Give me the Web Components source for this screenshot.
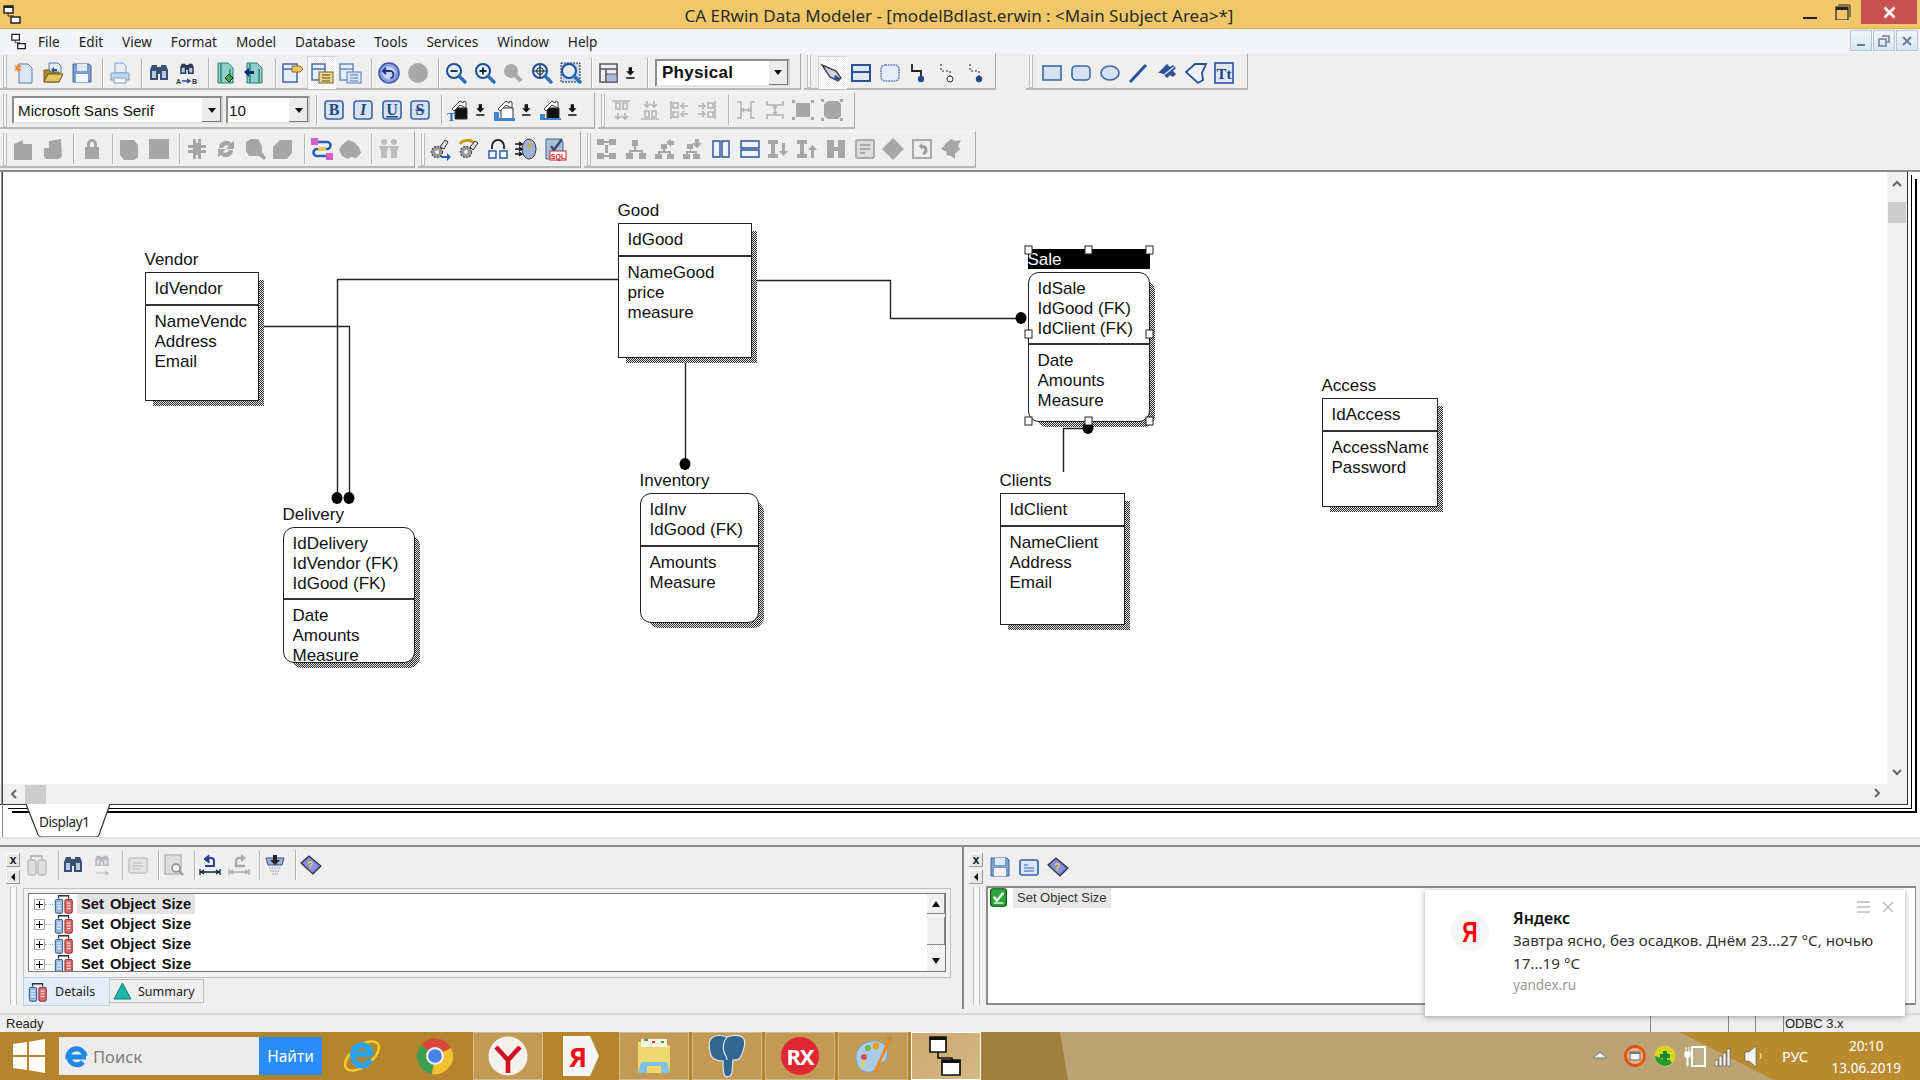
<!DOCTYPE html>
<html>
<head>
<meta charset="utf-8">
<title>CA ERwin Data Modeler</title>
<style>
  html, body { margin: 0; height: 100%; overflow: hidden; background: #efefef; }
  body { font-family: "Liberation Sans", sans-serif; }
</style>
</head>
<body>
<erwin-app></erwin-app>
<script>
// ---- icons ----
const G = '#a9a9a9';
const mag = (inner = '', c = '#1c4f96') => `<circle cx="10" cy="10" r="7" fill="#e4eefa" stroke="${c}" stroke-width="2"/><path d="M15 15l6 6" stroke="#2b6fb8" stroke-width="3.4" stroke-linecap="round"/>${inner}`;
const binoc = (c = '#3b4f75') => `<path d="M3 19V9l2-5h5v2h4V4h5l2 5v10h-8v-6h-2v6z" fill="${c}"/><path d="M5 10h4v7H5zM15 10h4v7h-4z" fill="#b9c9e0"/>`;
const down = `<path d="M8 5h4v5h3l-5 5-5-5h3z M5 17h10v2H5z" fill="#111"/>`;
const house = (body, under) => `<path d="M8 10h12v11H8z" fill="${body}" stroke="#333"/><path d="M5 11l8-8 3 2 1-2 2 1v6l-6-3-6 6z" fill="#fff" stroke="#444"/>${under}`;
const fmt = (ch, style = '') => `<rect x="3" y="3" width="18" height="18" rx="3" fill="#d6e3f4" stroke="#3c63a5" stroke-width="1.6"/><text x="12" y="17" text-anchor="middle" font-family="Liberation Serif" font-weight="700" font-size="16" fill="#27477f" ${style}>${ch}</text>`;
const gear = `<circle cx="9" cy="15" r="5.5" fill="#999" stroke="#555" stroke-width="1.4" stroke-dasharray="2 1.2"/><circle cx="9" cy="15" r="2" fill="#eee"/>`;
const alignL = (d) => `<path d="${d}" fill="none" stroke="#b4b4b4" stroke-width="1.6"/>`;
const tree = (d) => `<path d="${d}" fill="#a6a6a6"/>`;
const doc = (c1, c2) => `<path d="M4 2h10l5 5v15H4z" fill="${c1}" stroke="#2f7a78"/><path d="M7 2v20M16 8v14" stroke="${c2}" stroke-width="2"/>`;
const win = (extra) => `<path d="M2 3h14v18H2z" fill="#e6eefa" stroke="#3f66a6" stroke-width="1.5"/><path d="M2 8h14" stroke="#3f66a6" stroke-width="1.5"/>${extra}`;
const bottles = (a, b) => `<path d="M6 6V3h11v3" fill="none" stroke="#333" stroke-width="1.4"/><rect x="2.5" y="7" width="8" height="15" rx="1.5" fill="${a}" stroke="#224a86"/><rect x="13" y="7" width="8" height="15" rx="1.5" fill="${b}" stroke="#8a2020"/><path d="M4.5 11h4M4.5 14h4M4.5 17h4M15 11h4M15 14h4M15 17h4" stroke="#fff"/>`;

const ICONS = {
  new: `<path d="M7 3h9l4 4v15H7z" fill="#dbe6f5" stroke="#5b7aa8"/><path d="M6 2l1 3 3-1-2 3 2 3-3-1-1 3-1-3-3 1 2-3-2-3 3 1z" fill="#ef8a3a"/>`,
  open: `<path d="M8 2h9l3 3v9H8z" fill="#e2ebf7" stroke="#5b7aa8"/><path d="M3 9h5l2 2h8v10H3z" fill="#a8892c" stroke="#6d5a18"/><path d="M3 21l4-8h15l-4 8z" fill="#e3c762" stroke="#6d5a18"/><path d="M10 9l3-3v2h3v2h-3v2z" fill="#2a4f8d"/>`,
  save: `<path d="M3 3h16l2 2v16H3z" fill="#7d9ccb" stroke="#48669a"/><rect x="7" y="3" width="10" height="7" fill="#dfe8f5"/><rect x="6" y="13" width="12" height="8" fill="#f2f5fa"/>`,
  print: `<path d="M7 2h8l3 3v7H7z" fill="#e6eefa" stroke="#7f9cc6"/><path d="M3 12h18v7H3z" fill="#c6d6ec" stroke="#7f9cc6"/><path d="M6 17h12v5H6z" fill="#f3f6fb" stroke="#7f9cc6"/>`,
  find: binoc(),
  replace: `<g transform="translate(3 0) scale(.75 .68)">${binoc('#2c3a57')}</g><text x="1" y="23" font-size="7" font-family="Liberation Sans" font-weight="700" fill="#333">A</text><path d="M7 20h7M12 18l3 2-3 2" fill="none" stroke="#2a4f8d" stroke-width="1.5"/><text x="17" y="23" font-size="7" font-family="Liberation Sans" font-weight="700" fill="#333">B</text>`,
  docgreen: doc('#8fd0c6', '#3f9a93') + `<path d="M15 13l4 4-4 4-4-4z" fill="#2eb13c" stroke="#111"/>`,
  docblue: doc('#8fd0c6', '#3f9a93') + `<path d="M1 11l5-4v3h5v3H6v3z" fill="#12287a"/>`,
  sub1: win(`<path d="M11 5h8l3 3-3 3h-8z" fill="#f0c65c" stroke="#8c6e1c"/>`),
  tbl1: `<path d="M2 3h13v16H2z" fill="#e6eefa" stroke="#4a6ea8" stroke-width="1.5"/><path d="M2 8h13" stroke="#4a6ea8" stroke-width="1.5"/><rect x="9" y="11" width="14" height="11" fill="#e8d38f" stroke="#7a6420"/><path d="M12 14h8M12 17h8M12 20h8" stroke="#5a4a14"/>`,
  tbl2: `<path d="M2 3h13v16H2z" fill="#e6eefa" stroke="#6b8abb" stroke-width="1.5"/><path d="M2 8h13" stroke="#6b8abb" stroke-width="1.5"/><rect x="9" y="11" width="14" height="11" fill="#d9e5f5" stroke="#577cb5"/><path d="M12 14h8M12 17h8M12 20h8" stroke="#577cb5"/>`,
  undo: `<circle cx="12" cy="12" r="10" fill="#8c9fe0" stroke="#3952a8" stroke-width="1.5"/><circle cx="12" cy="12" r="6.5" fill="#c9d3f4"/><path d="M9 7l-3 3 3 3M6.5 10h6a3.5 3.5 0 0 1 1 7" fill="none" stroke="#1f2f7e" stroke-width="1.8"/>`,
  stop: `<circle cx="12" cy="12" r="10" fill="#a8a8a8"/>`,
  zout: mag('<path d="M6.5 10h7" stroke="#123" stroke-width="1.8"/>'),
  zin: mag('<path d="M6.5 10h7M10 6.5v7" stroke="#123" stroke-width="1.8"/>'),
  zgrey: `<circle cx="10" cy="10" r="7" fill="${G}"/><path d="M14 14l6 6" stroke="${G}" stroke-width="4"/>`,
  zfit: mag('<path d="M4 10h12M10 4v12" stroke="#123" stroke-width="1.2"/><circle cx="10" cy="10" r="3.4" fill="none" stroke="#123"/>'),
  zsel: `<rect x="2" y="2" width="19" height="19" fill="#c9d3e2" stroke="#234" stroke-dasharray="2 1"/>` + mag(''),
  panel: `<path d="M3 3h17v18H3z" fill="#eee" stroke="#556" stroke-width="1.6"/><path d="M3 8h17M9 8v13" stroke="#556" stroke-width="1.6"/><path d="M9 13h11v8H9z" fill="#a9bbd2" stroke="#556"/>`,
  down,
  b: fmt('B'), i: fmt('I', 'font-style="italic"'), u: fmt('U', 'text-decoration="underline"'), s: fmt('S', 'text-decoration="line-through"'),
  font: house('#111', `<text x="0" y="23" font-family="Liberation Serif" font-weight="700" font-size="13" fill="#2a6fc0">T</text>`),
  fill: house('#fff', `<path d="M1 14h5v6h16v3H1z" fill="#3f83d6"/>`),
  line: house('#111', `<path d="M1 16h5v4h16v2H1z" fill="#3f83d6"/>`),
  aT: alignL('M3 3h18M7 5v6h4V5zM14 5v6h4V5zM9 15v6M6 18l3 3 3-3M16 15v6M13 18l3 3 3-3'),
  aB: alignL('M3 21h18M7 19v-6h4v6zM14 19v-6h4v6zM9 3v6M6 6l3 3 3-3M16 3v6M13 6l3 3 3-3'),
  aL: alignL('M4 3v18M6 5h5v5H6zM6 14h5v5H6zM14 8h7M17 5l-3 3 3 3M14 16h7M17 13l-3 3 3 3'),
  aR: alignL('M20 3v18M13 5h5v5h-5zM13 14h5v5h-5zM3 8h7M7 5l3 3-3 3M3 16h7M7 13l3 3-3 3'),
  dH: alignL('M3 4h4v16H3M21 4h-4v16h4M8 12h8M10 10l-2 2 2 2M14 10l2 2-2 2'),
  dV: alignL('M4 3v4h16V3M4 21v-4h16v4M12 8v8M10 10l2-2 2 2M10 14l2 2 2-2'),
  sW: tree('M5 5h14v14H5z M1 2h3v3H1zM20 2h3v3h-3zM1 19h3v3H1zM20 19h3v3h-3z'),
  sH: tree('M4 6l4-3h10l3 3v12l-3 3H8l-4-3z M1 1h3v3H1zM20 1h3v3h-3zM1 20h3v3H1zM20 20h3v3h-3z'),
  b1: tree('M2 7l9-4v4h9v16H2z'),
  b2: tree('M8 4l12-2 1 17-3 3H5l-2-2v-9h5z'),
  lock: tree('M7 10V7a5 5 0 0 1 10 0v3h2v12H5V10zM10 10h4V7a2 2 0 0 0-4 0z'),
  b3: tree('M2 3h14l4 5v12l-4 3H6L2 18z'),
  sq: tree('M2 2h20v20H2z'),
  puz: tree('M8 2h3v4h2V2h3v6h5v3h-5v2h5v3h-5v6h-3v-4h-2v4H8v-6H3v-3h5v-2H3V8h5z'),
  sync: `<path d="M5 11a7 7 0 0 1 12-5l3-2v8h-8l3-3a4 4 0 0 0-6 2zM19 13a7 7 0 0 1-12 5l-3 2v-8h8l-3 3a4 4 0 0 0 6-2z" fill="#a6a6a6"/>`,
  b4: tree('M3 5l5-3h7l4 7v6l4 6-2 2-5-4H6l-3-5z'),
  b5: tree('M2 10l7-7h12v13l-5 6H2z'),
  link: `<path d="M6 5h11a3 3 0 0 1 0 7H7a3 3 0 0 0 0 7h12" fill="none" stroke="#2a5fb5" stroke-width="2.6"/><path d="M8 12h8" stroke="#e6c43a" stroke-width="3"/><rect x="1" y="1" width="7" height="7" fill="#d45ec3"/><rect x="16" y="16" width="7" height="7" fill="#d45ec3"/>`,
  cloud: tree('M4 8l6-5 6 2 5 5 2 6-5 5-5-1-3 2-6-3-3-6z'),
  ppl: `<g fill="#bdbdbd"><circle cx="7" cy="5" r="3"/><circle cx="17" cy="5" r="3"/><path d="M2 9h10l-2 6v6H4v-6zM12 9h10l-2 6v6h-6v-6z"/></g>`,
  gear1: gear + `<path d="M13 19h6v-3l4 4-4 4v-3h-6z" fill="#2a5fb5"/><path d="M12 10l5-7 3 2-4 7z" fill="#ddd" stroke="#333"/>`,
  gear2: gear + `<path d="M3 7a8 6 0 0 1 14-1" fill="none" stroke="#c79a22" stroke-width="3"/><path d="M13 10l5-6 3 2-5 7z" fill="#ddd" stroke="#333"/>`,
  headset: `<path d="M6 12V9a6 6 0 0 1 12 0v3" fill="none" stroke="#222" stroke-width="1.8"/><rect x="3" y="14" width="7" height="7" fill="#fff" stroke="#2a5fb5" stroke-width="1.5"/><rect x="14" y="14" width="7" height="7" fill="#fff" stroke="#2a5fb5" stroke-width="1.5"/>`,
  mouse: `<ellipse cx="15" cy="12" rx="7" ry="10" fill="#9fb2cf" stroke="#334"/><ellipse cx="15" cy="8" rx="1.5" ry="3" fill="#e0a92f"/><path d="M1 7h6M1 12h6M1 17h6M5 5l3 2-3 2M5 10l3 2-3 2M5 15l3 2-3 2" fill="none" stroke="#111" stroke-width="1.4"/>`,
  sql: `<path d="M3 2h14l3 3v17H3z" fill="#a8c0dc" stroke="#47658e"/><path d="M8 9l3 4 8-11" fill="none" stroke="#384c6c" stroke-width="2.4"/><rect x="7" y="14" width="16" height="9" fill="#fff" stroke="#c22"/><text x="15" y="22" text-anchor="middle" font-size="7" font-weight="700" font-family="Liberation Sans" fill="#c22">SQL</text>`,
  tr1: tree('M3 2h7v6H3zM15 2h7v6h-7zM10 4h5v2h-5zM11 8h3v8h-3zM3 16h7v6H3zM15 16h7v6h-7zM10 18h5v2h-5z'),
  tr2: tree('M9 3h6v6H9zM11 9h2v4h7v3h3v6h-7v-6h2v-1H8v1h2v6H3v-6h3v-3h5z'),
  tr3: tree('M9 7h6v5h-2v2h6v3h3v5h-7v-5h2v-1H8v1h2v5H3v-5h3v-3h5v-2H9zM14 5l5-3v2h3v4h-3v2z'),
  tr4: tree('M7 7h6v5h-2v2h6v3h3v5h-7v-5h2v-1H8v1h2v5H3v-5h3v-3h4v-2H7zM15 2h4v4h3l-5 5-5-5h3z'),
  col2: `<path d="M4 4h7v16H4zM13 4h7v16h-7z" fill="#eef3fb" stroke="#2a5296" stroke-width="1.4"/>`,
  row2: `<path d="M3 4h18v7H3zM3 13h18v7H3z" fill="#eef3fb" stroke="#2a5296" stroke-width="1.4"/>`,
  ordD: tree('M2 3h10v4H9v10h3v4H2v-4h3V7H2zM16 6h3v8h3l-4.500 5L13 14h3z'),
  ordU: tree('M2 3h10v4H9v10h3v4H2v-4h3V7H2zM16 21h3v-8h3l-4.500-5L13 13h3z'),
  h: tree('M3 3h7v7h4V3h7v18h-7v-7h-4v7H3z'),
  note: `<rect x="3" y="3" width="18" height="18" rx="2" fill="#ddd" stroke="#aaa" stroke-width="2"/><path d="M7 8h10M7 12h10M7 16h5" stroke="#999" stroke-width="1.6"/>`,
  dia: tree('M12 1l11 11-11 11L1 12z'),
  back: `<rect x="3" y="3" width="18" height="18" fill="#eee" stroke="#aaa" stroke-width="2"/><path d="M9 9l3-3v2a5 5 0 0 1 1 10v-3a2 2 0 0 0-1-4v2z" fill="#999"/>`,
  tool: tree('M6 7l6-5 4 2 6-1-3 6 2 3-5 5v5l-4-3-5-1 1-3-6-3 4-4z'),
  cursor: `<path d="M2 4l14 6 5 7-3 3-8-4z" fill="#cfd6df" stroke="#444" stroke-width="1.4"/><path d="M15 14l5 3-2 3-4-3z" fill="#2a5296"/>`,
  ent: `<path d="M3 4h18v16H3z" fill="#dfe8f6" stroke="#2a5296" stroke-width="2"/><path d="M3 11h18" stroke="#2a5296" stroke-width="2"/>`,
  entr: `<rect x="3" y="4" width="18" height="16" rx="4" fill="#e6ecf8" stroke="#6d89c0" stroke-width="1.6" stroke-dasharray="2 .7"/>`,
  c1: `<path d="M6 3v7h9v5" fill="none" stroke="#222" stroke-width="1.8"/><circle cx="15" cy="18" r="3.2" fill="#24478c"/>`,
  c2: `<path d="M6 3v7h9v5" fill="none" stroke="#222" stroke-dasharray="2 2"/><circle cx="15" cy="18" r="3" fill="#fff" stroke="#333"/>`,
  c3: `<path d="M6 3v7h9v5" fill="none" stroke="#222" stroke-dasharray="2 2"/><circle cx="15" cy="18" r="3.2" fill="#24478c"/>`,
  rect: `<rect x="3" y="5" width="18" height="14" fill="#d6e2f4" stroke="#3f66a6" stroke-width="1.6"/>`,
  rrect: `<rect x="3" y="5" width="18" height="14" rx="4" fill="#d6e2f4" stroke="#3f66a6" stroke-width="1.6"/>`,
  oval: `<ellipse cx="12" cy="12" rx="9" ry="7" fill="#d6e2f4" stroke="#3f66a6" stroke-width="1.6"/>`,
  ln: `<path d="M4 21L20 4" stroke="#2a4f9d" stroke-width="3"/>`,
  pin: `<path d="M3 12l9-9 3 3 3-2 3 3-3 3 3 3-3 3-3-2-3 3-3-3-3-2z" fill="#2f4f99"/><path d="M5 17L19 6" stroke="#dfe8f6" stroke-width="1.4"/>`,
  tag: `<path d="M2 11l9-8h11l-4 9 1 7-5 3z" fill="#eef3fb" stroke="#2a4f9d" stroke-width="1.8"/>`,
  txt: `<rect x="3" y="2" width="18" height="20" fill="#dfe8f6" stroke="#2a4f9d" stroke-width="1.6"/><text x="12" y="18" text-anchor="middle" font-family="Liberation Serif" font-weight="700" font-size="15" fill="#1f3d7c">Tt</text>`,
  bottles: bottles('#9ab8dc', '#d96c6c'),
  bottlesG: `<path d="M6 6V3h11v3" fill="none" stroke="#aaa" stroke-width="1.4"/><rect x="3" y="7" width="8" height="15" rx="1.5" fill="#ddd" stroke="#aaa"/><rect x="13" y="7" width="8" height="15" rx="1.5" fill="#ddd" stroke="#aaa"/>`,
  findG: `<g opacity=".4"><g transform="translate(3 0) scale(.75 .68)">${binoc('#666')}</g></g><path d="M6 20h12M15 18l3 2-3 2" fill="none" stroke="#bbb" stroke-width="1.2"/>`,
  card: `<rect x="3" y="5" width="18" height="15" rx="2" fill="#e2e2e2" stroke="#c4c4c4" stroke-width="1.6"/><path d="M7 10h10M7 13h10M7 16h7" stroke="#bbb"/>`,
  cardB: `<rect x="3" y="5" width="18" height="15" rx="2" fill="#dce8f8" stroke="#2f62b0" stroke-width="1.6"/><path d="M7 10h4M7 13h10M7 16h10" stroke="#2f62b0"/>`,
  rep: `<rect x="3" y="2" width="16" height="19" fill="#ddd" stroke="#bbb" stroke-width="1.6"/><circle cx="14" cy="15" r="4" fill="#eee" stroke="#888" stroke-width="1.4"/><path d="M17 18l4 4" stroke="#999" stroke-width="2"/>`,
  arrUp: `<path d="M6 6l5-4v8z" fill="#2a3f96" stroke="#2a3f96"/><path d="M9 5h4a3 3 0 0 1 3 3v5H7" fill="none" stroke="#2a3f96" stroke-width="2"/><path d="M2 16v6M22 16v6M3 19h18M6 17l-3 2 3 2M18 17l3 2-3 2" fill="none" stroke="#123" stroke-width="1.3"/>`,
  arrUpG: `<path d="M16 5h-4a3 3 0 0 0-3 3v5h9" fill="none" stroke="#aaa" stroke-width="2.4"/><path d="M14 1l5 4-5 4z" fill="#aaa"/><path d="M2 16v6M22 16v6M3 19h18M6 17l-3 2 3 2M18 17l3 2-3 2" fill="none" stroke="#aaa" stroke-width="1.3"/>`,
  dl: `<path d="M3 5h18l-2 7H5z" fill="#9db4d9" stroke="#334d86"/><path d="M10 2h4v5h3l-5 5-5-5h3z" fill="#222"/><path d="M6 15h12M7 18h10M9 21h6" stroke="#7a8db0" stroke-dasharray="1.500 1"/>`,
  help: `<path d="M2 10L10 3l12 10-8 8z" fill="#6a78d8" stroke="#333" stroke-width="1.2"/><path d="M4 10l6-5 9 8-6 6z" fill="#8792e5"/><text x="11" y="16" text-anchor="middle" font-size="10" font-weight="700" font-family="Liberation Sans" fill="#e8d23a">?</text>`,
  check: `<rect x="2" y="1" width="20" height="22" rx="3" fill="#2aa83a" stroke="#0c4a14" stroke-width="1.4"/><path d="M6 11l4 5 8-10" fill="none" stroke="#fff" stroke-width="3"/><path d="M6 19h12" stroke="#fff" stroke-width="1.6"/>`
};
const svgIcon = (name, size = 24) => `<svg width="${size}" height="${size}" viewBox="0 0 24 24" aria-hidden="true">${ICONS[name] || ''}</svg>`;

// ---- small helper: class with static css + html ----
function defineEl(tag, css, html, setup) {
  customElements.define(tag, class extends HTMLElement {
    constructor() {
      super();
      this.attachShadow({ mode: 'open' });
    }
    connectedCallback() {
      const body = typeof html === 'function' ? html(this) : html;
      this.shadowRoot.innerHTML = `<style>${css}</style>${body}`;
      if (setup) setup(this);
    }
  });
}

defineEl('title-bar', `
  :host { display: flex; align-items: flex-start; justify-content: center; position: relative; height: 28px; background: #f0c869; border-bottom: 1px solid #d3ab51; font: 17px "Noto Sans", sans-serif; color: #2b2b2b; }
  .txt { line-height: 32px; padding-right: 2px; white-space: nowrap; }
  .app { position: absolute; left: 3px; top: 5px; }
  .btns { position: absolute; right: 3px; top: 0; display: flex; align-items: flex-start; }
  .min, .max { width: 28px; height: 24px; display: flex; justify-content: center; align-items: center; }
  .max { margin-left: 5px; }
  .close { width: 56px; height: 24px; background: #c75050; margin-left: 4px; display: flex; justify-content: center; align-items: center; }
`, `
  <svg class="app" width="19" height="19" viewBox="0 0 19 19"><path d="M1 1h9v7H1z" fill="#fff" stroke="#222" stroke-width="1.500"/><path d="M1 1h9v2H1zM8 12h9v2H8z" fill="#222"/><path d="M8 12h9v6H8z" fill="#fff" stroke="#222" stroke-width="1.500"/><path d="M5 8v3h6" fill="none" stroke="#222"/></svg>
  <span class="txt">CA ERwin Data Modeler - [modelBdlast.erwin : &lt;Main Subject Area&gt;*]</span>
  <div class="btns">
    <div class="min"><svg width="16" height="24" viewBox="0 0 16 24"><path d="M1 17h14v2H1z" fill="#222"/></svg></div>
    <div class="max"><svg width="16" height="16" viewBox="0 0 16 16"><path d="M3 1h12v12" fill="none" stroke="#222"/><path d="M1 3h12v13H1z" fill="none" stroke="#222" stroke-width="1.200"/><path d="M1 3h12v3H1z" fill="#222"/></svg></div>
    <div class="close"><svg width="13" height="13" viewBox="0 0 13 13"><path d="M1.500 1.500l10 10M11.500 1.500l-10 10" stroke="#fff" stroke-width="2.600"/></svg></div>
  </div>
`);

defineEl('menu-bar', `
  :host { display: flex; position: relative; height: 24px; background: #f4f5f8; font: 13.6px "Noto Sans", sans-serif; color: #222; align-items: center; }
  .icon { margin: 0 11px 0 11px; width: 16px; flex: none; }
  .items { display: flex; gap: 19px; }
  .mdi { position: absolute; right: 2px; top: 1px; display: flex; gap: 1px; }
  .mdi div { width: 22px; height: 21px; border: 1px solid #b5c3d3; box-sizing: border-box; background: linear-gradient(#eef5fc, #d8e7f6); display: flex; align-items: center; justify-content: center; }
`, `
  <svg class="icon" width="18" height="17" viewBox="0 0 19 19"><path d="M1 1h9v7H1z" fill="#fff" stroke="#222" stroke-width="1.500"/><path d="M8 12h9v6H8z" fill="#fff" stroke="#222" stroke-width="1.500"/><path d="M5 8v3h6" fill="none" stroke="#222"/></svg>
  <div class="items"><span>File</span><span>Edit</span><span>View</span><span>Format</span><span>Model</span><span>Database</span><span>Tools</span><span>Services</span><span>Window</span><span>Help</span></div>
  <div class="mdi">
    <div><svg width="12" height="12" viewBox="0 0 12 12"><path d="M2 9h8v2H2z" fill="#6d7d90"/></svg></div>
    <div><svg width="12" height="12" viewBox="0 0 12 12"><path d="M4 1h7v6H9M1 4h7v7H1z" fill="none" stroke="#6d7d90" stroke-width="1.500"/></svg></div>
    <div><svg width="12" height="12" viewBox="0 0 12 12"><path d="M2 2l8 8M10 2l-8 8" stroke="#6d7d90" stroke-width="2"/></svg></div>
  </div>
`);

defineEl('tool-row', `
  :host { display: flex; height: 37px; margin-bottom: 2px; gap: 3px; }
`, `<slot></slot>`);

defineEl('tool-bar', `
  :host { display: flex; align-items: center; height: 37px; box-sizing: border-box; padding-left: 10px; padding-right: 6px; position: relative; background: #efefef; border-right: 1px solid #a8a8a8; border-bottom: 2px solid #b9b9b9; border-top: 1px solid #f7f7f7; }
  .grip { position: absolute; left: 3px; top: 1px; bottom: 0; width: 4px; border: 1px solid #bdbdbd; border-top: 0; box-sizing: border-box; background: #f6f6f6; }
`, `<div class="grip"></div><slot></slot>`);

defineEl('tool-btn', `
  :host { display: flex; align-items: center; justify-content: center; width: 28.7px; height: 30px; flex: none; box-sizing: border-box; }
  :host([pressed]) { background: repeating-conic-gradient(#fff 0 25%, #ececec 0 50%) 0 0 / 2px 2px; box-shadow: inset 1px 1px #d0d0d0, inset -1px -1px #fff; height: 33px; }
  :host([narrow]) { width: 17.5px; }
  svg { display: block; overflow: visible; }
`, (el) => svgIcon(el.getAttribute('icon'), el.hasAttribute('narrow') ? 20 : 24));

defineEl('tool-sep', `
  :host { display: block; flex: none; width: var(--sep, 9.8px); height: 30px; }
  div { width: 1px; height: 100%; margin-left: 6px; background: #b4b4b4; box-shadow: 1px 0 #fff; }
`, `<div></div>`);

defineEl('combo-box', `
  :host { display: flex; box-sizing: border-box; flex: none; height: 28px; background: #fff; border: 2px solid #8d8d8d; border-right-color: #cfcfcf; border-bottom-color: #e4e4e4; color: #111; align-items: center; position: relative; overflow: hidden; }
  span { padding-left: var(--pad, 5px); white-space: nowrap; flex: 1; }
  .arrow { width: 19px; align-self: stretch; background: #ececec; border-left: 1px solid #fff; box-shadow: inset -1px -1px #777; display: flex; align-items: center; justify-content: center; flex: none; }
  .arrow i { width: 0; height: 0; border: 4px solid transparent; border-top: 5px solid #111; border-bottom: 0; }
`, `<span><slot></slot></span><div class="arrow"><i></i></div>`);

defineEl('tool-area', `
  :host { display: block; height: 117px; background: #efefef; box-sizing: border-box; overflow: hidden; }
`, `<slot></slot>`);

// entity box on the diagram
defineEl('er-entity', `
  :host { position: absolute; display: block; font: 17px/20px "Liberation Sans", sans-serif; color: #111; }
  .name { position: absolute; left: -0.5px; right: 0; top: -22px; height: 20px; white-space: nowrap; }
  :host([selected]) .name { background: #000; color: #fff; top: -23px; padding-top: 1px; box-sizing: border-box; }
  .shadow { position: absolute; left: 8px; top: 8px; right: -5px; bottom: -5px; background: repeating-conic-gradient(#333 0 25%, #ddd 0 50%) 0 0 / 2px 2px; border-radius: var(--r); }
  .box { position: absolute; inset: 0; box-sizing: border-box; background: #fff; border: 1px solid #222; border-radius: var(--r); overflow: hidden; display: flex; flex-direction: column; }
  .k { box-sizing: border-box; flex: none; border-bottom: 2px solid #333; padding: 6px 9px 0 8.5px; overflow: hidden; white-space: nowrap; }
  .a { padding: 6px 9px 0 8.5px; white-space: nowrap; overflow: hidden; }
  .k div, .a div { overflow: hidden; height: 20px; }
`, (el) => {
  const rows = (s) => (s || '').split('|').map(t => `<div>${t}</div>`).join('');
  return `<div class="name">${el.getAttribute('name')}</div><div class="shadow"></div>
    <div class="box"><div class="k" style="height:${el.getAttribute('div')}px">${rows(el.getAttribute('keys'))}</div><div class="a">${rows(el.getAttribute('attrs'))}</div></div>`;
}, (el) => {
  el.style.left = el.getAttribute('x') + 'px';
  el.style.top = (el.getAttribute('y') - 172) + 'px';
  el.style.width = el.getAttribute('w') + 'px';
  el.style.height = el.getAttribute('h') + 'px';
  el.style.setProperty('--r', el.hasAttribute('rounded') ? '11px' : '0');
});

const chev = (d) => `<svg width="12" height="12" viewBox="0 0 12 12"><path d="${d}" fill="none" stroke="#666" stroke-width="2"/></svg>`;

defineEl('model-canvas', `
  :host { display: grid; grid-template-columns: 1887px 20px; grid-template-rows: 612px 20px; height: 632px; position: relative; background: #fff; }
  .paper { position: relative; overflow: hidden; background: #fff; grid-column: 1; grid-row: 1; }
  .edge { position: absolute; left: 2px; top: 0; bottom: 0; width: 1px; background: #444; box-shadow: -1px 0 #999; z-index: 4; }
  .vs { background: #f0f0f0; display: flex; flex-direction: column; align-items: center; position: relative; grid-column: 2; grid-row: 1; }
  .vs .u { height: 24px; display: flex; align-items: center; }
  .vs .t { width: 18px; height: 21px; background: #cdcdcd; margin-top: 6px; }
  .vs .d { margin-top: auto; height: 24px; display: flex; align-items: center; }
  .hs { grid-column: 1 / 3; grid-row: 2; background: #f0f0f0; display: flex; align-items: center; padding-left: 8px; }
  .hs .t { width: 21px; height: 19px; background: #cdcdcd; margin-left: 5px; }
  .hs .r { margin-left: auto; margin-right: 24px; }
  svg.wires { position: absolute; left: 0; top: 0; }
  svg.top { z-index: 3; }
`, `
  <div class="paper">
    <svg class="wires" width="1887" height="612" viewBox="0 172 1887 612">
      <g fill="none" stroke="#222" stroke-width="1.400">
        <path d="M618 279.500H337.500V496"/>
        <path d="M258 326.500H349.500V496"/>
        <path d="M685.500 358V462"/>
        <path d="M752 280.500H890.500V318.500H1020"/>
        <path d="M1063.500 472V428.500H1088"/>
      </g>
    </svg>
    <slot></slot>
    <svg class="wires top" width="1887" height="612" viewBox="0 172 1887 612">
      <g fill="#000">
        <ellipse cx="337" cy="498" rx="5.500" ry="6"/><ellipse cx="349" cy="498" rx="5.500" ry="6"/>
        <ellipse cx="685" cy="464" rx="5.500" ry="6"/><ellipse cx="1021" cy="318" rx="5.500" ry="6"/>
        <ellipse cx="1088" cy="428" rx="5.500" ry="6"/>
      </g>
      <g fill="#fff" stroke="#222">
        <rect x="1025" y="246" width="7" height="8"/><rect x="1085" y="246" width="7" height="8"/><rect x="1146" y="246" width="7" height="8"/>
        <rect x="1025" y="330" width="7" height="8"/><rect x="1146" y="330" width="7" height="8"/>
        <rect x="1025" y="417" width="7" height="8"/><rect x="1085" y="417" width="7" height="8"/><rect x="1146" y="417" width="7" height="8"/>
      </g>
    </svg>
  </div>
  <div class="vs"><div class="u">${chev('M2 8l4-4 4 4')}</div><div class="t"></div><div class="d">${chev('M2 4l4 4 4-4')}</div></div>
  <div class="hs">${chev('M8 2L4 6l4 4')}<div class="t"></div><div class="r">${chev('M4 2l4 4-4 4')}</div></div>
  <div class="edge"></div>
`);

// the three stepped window borders and the sheet tab
defineEl('mdi-frame', `
  :host { display: block; height: 669px; background: #fff; border-top: 2px solid #8a8a8a; box-sizing: border-box; position: relative; overflow: hidden; }
  .l1 { width: 1908px; border-right: 1px solid #333; border-bottom: 1px solid #333; box-sizing: border-box; }
  .l2, .l3 { position: absolute; box-sizing: border-box; }
  .l2 { left: 8px; top: 3px; width: 1904px; height: 634px; border-right: 1px solid #000; border-bottom: 1px solid #000; }
  .l3 { left: 12px; top: 7px; width: 1905px; height: 634px; border-right: 2px solid #000; border-bottom: 2px solid #000; }
  .tab { position: absolute; left: 24px; top: 632px; }
  .tab span { position: absolute; left: 15px; top: 9px; font: 13.5px "Noto Sans", sans-serif; letter-spacing: -.4px; color: #222; }
  .lf { position: absolute; left: 2px; top: 632px; width: 1px; height: 35px; background: #888; }
  .bot { position: absolute; left: 0; right: 0; bottom: 0; height: 2px; background: #e4e4e4; }
`, `
  <div class="l2"></div><div class="l3"></div>
  <div class="l1"><slot></slot></div>
  <div class="lf"></div>
  <div class="tab">
    <svg width="90" height="35" viewBox="0 0 90 35"><path d="M2 0L13 28Q14 33 18 33H72Q75 33 76 28L86 0z" fill="#fff"/><path d="M2 0L13 28Q14 33 18 33H72Q75 33 76 28L86 0" fill="none" stroke="#333" stroke-width="1.200"/></svg>
    <span>Display1</span>
  </div>
  <div class="bot"></div>
`);

defineEl('close-stack', `
  :host { display: flex; flex-direction: column; gap: 3px; width: 14px; flex: none; }
  div { height: 14px; background: #e8e8e8; box-shadow: inset -1px -1px #999, inset 1px 1px #fff; display: flex; align-items: center; justify-content: center; font: 700 12px/1 "Liberation Sans", sans-serif; color: #111; }
  i { width: 0; height: 0; border: 4px solid transparent; border-right: 4px solid #111; border-left: 0; }
`, `<div>x</div><div><i></i></div>`);

defineEl('v-grip', `
  :host { display: block; width: 7px; box-sizing: border-box; border-left: 1px solid #bfbfbf; border-right: 1px solid #bfbfbf; background: #f7f7f7; flex: none; }
`, ``);

defineEl('tree-row', `
  :host { display: flex; align-items: center; height: 20px; padding-left: 5px; white-space: nowrap; font: 700 14.7px "Liberation Sans", sans-serif; color: #111; word-spacing: 2px; }
  .plus { width: 9px; height: 9px; border: 1px solid #aaa; position: relative; background: #fff; flex: none; }
  .plus::before { content: ""; position: absolute; left: 1px; right: 1px; top: 4px; height: 1px; background: #000; }
  .plus::after { content: ""; position: absolute; top: 1px; bottom: 1px; left: 4px; width: 1px; background: #000; }
  .dots { width: 8px; border-top: 1px dotted #aaa; flex: none; }
  svg { flex: none; }
  span { margin-left: 2px; padding: 0 4px; line-height: 20px; }
  :host([sel]) span { background: #e4e4e4; }
`, `<div class="plus"></div><div class="dots"></div>${svgIcon('bottles', 22)}<span><slot></slot></span>`);

defineEl('left-pane', `
  :host { display: flex; width: 964px; height: 100%; box-sizing: border-box; padding: 6px 0 0 6px; flex: none; border-right: 2px solid #8a8a8a; position: relative; --sep: 7.3px; }
  .side { display: flex; flex-direction: column; align-items: center; width: 14px; flex: none; }
  v-grip { margin-top: 3px; height: 118px; }
  .main { flex: 1; display: flex; flex-direction: column; padding-left: 3px; }
  .icons { display: flex; align-items: center; height: 24px; padding-left: 0; margin-bottom: 11px; }
  .group { width: 928px; height: 90px; border: 1px solid #c0c0c0; box-sizing: border-box; background: #f2f2f2; padding: 4px 4px 5px 4px; }
  .tree { height: 100%; box-sizing: border-box; border: 1px solid #777; background: #fff; display: flex; overflow: hidden; }
  .rows { flex: 1; overflow: hidden; }
  .sb { width: 18px; display: flex; flex-direction: column; background: repeating-conic-gradient(#fff 0 25%, #eaeaea 0 50%) 0 0 / 2px 2px; flex: none; }
  .sb div { background: #efefef; box-shadow: inset -1px -1px #888; display: flex; align-items: center; justify-content: center; }
  .sb .b { height: 20px; }
  .sb .th { height: 28px; margin-top: 3px; }
  .sb .b2 { margin-top: auto; box-shadow: none; }
  .sb i { width: 0; height: 0; border: 4.500px solid transparent; }
  .tabs { display: flex; align-items: flex-start; margin-top: -1px; }
  .t { display: flex; align-items: center; box-sizing: border-box; font: 12.5px "Noto Sans", sans-serif; color: #222; }
  .t.on { width: 87px; height: 29px; background: #e3eefa; border: 1px solid #b8d3ef; padding-left: 3px; gap: 6px; }
  .t.off { width: 94px; height: 24px; margin-top: 2px; background: #efefef; border: 1px solid #bdbdbd; border-left: 0; padding-left: 3px; gap: 6px; }
`, `
  <div class="side"><close-stack></close-stack><v-grip></v-grip></div>
  <div class="main">
    <div class="icons">
      <tool-btn icon="bottlesG"></tool-btn><tool-sep></tool-sep><tool-btn icon="find"></tool-btn><tool-btn icon="findG"></tool-btn><tool-sep></tool-sep><tool-btn icon="card"></tool-btn><tool-sep></tool-sep><tool-btn icon="rep"></tool-btn><tool-sep></tool-sep><tool-btn icon="arrUp"></tool-btn><tool-btn icon="arrUpG"></tool-btn><tool-sep></tool-sep><tool-btn icon="dl"></tool-btn><tool-sep></tool-sep><tool-btn icon="help"></tool-btn>
    </div>
    <div class="group"><div class="tree">
      <div class="rows">
        <tree-row sel>Set Object Size</tree-row><tree-row>Set Object Size</tree-row><tree-row>Set Object Size</tree-row><tree-row>Set Object Size</tree-row>
      </div>
      <div class="sb">
        <div class="b"><i style="border-bottom:6px solid #111;border-top:0"></i></div>
        <div class="th"></div>
        <div class="b b2"><i style="border-top:6px solid #111;border-bottom:0"></i></div>
      </div>
    </div></div>
    <div class="tabs">
      <div class="t on">${svgIcon('bottles', 22)}<span>Details</span></div>
      <div class="t off"><svg width="19" height="18" viewBox="0 0 19 18"><path d="M9.500 1L18 17H1z" fill="#1fb8a8" stroke="#0f7f78"/></svg><span>Summary</span></div>
    </div>
  </div>
`);

defineEl('right-pane', `
  :host { display: flex; flex: 1; min-width: 0; height: 100%; box-sizing: border-box; padding: 6px 4px 4px 5px; }
  .side { display: flex; flex-direction: column; align-items: center; width: 14px; flex: none; }
  v-grip { margin-top: 3px; height: 118px; }
  .main { flex: 1; display: flex; flex-direction: column; padding-left: 3px; }
  .icons { display: flex; align-items: center; height: 28px; padding-left: 0; margin-bottom: 5px; }
  .list { background: #fff; border: 2px solid #8a8a8a; border-right: 1px solid #8a8a8a; padding: 0 0 0 1px; font: 13px "Liberation Sans", sans-serif; color: #333; display: flex; align-items: flex-start; height: 119px; box-sizing: border-box; }
  .sel { background: #e8e8e8; padding: 0 4px; margin-left: 5px; height: 20px; line-height: 20px; white-space: nowrap; }
`, `
  <div class="side"><close-stack></close-stack><v-grip></v-grip></div>
  <div class="main">
    <div class="icons"><tool-btn icon="save"></tool-btn><tool-btn icon="cardB"></tool-btn><tool-btn icon="help"></tool-btn></div>
    <div class="list">${svgIcon('check', 19)}<div class="sel">Set Object Size</div></div>
  </div>
`);

defineEl('bottom-panes', `
  :host { display: flex; height: 164px; background: #efefef; border-top: 2px solid #8a8a8a; box-sizing: border-box; flex: none; }
`, `<slot></slot>`);

defineEl('status-bar', `
  :host { display: flex; height: 17px; background: #efefef; font: 13px/17px "Liberation Sans", sans-serif; color: #222; border-top: 2px solid #d9d9d9; box-sizing: content-box; padding-left: 6px; flex: none; }
  .r { margin-left: auto; display: flex; margin-right: 13px; }
  .c { border-left: 1px solid #888; box-sizing: border-box; height: 17px; }
`, `
  <span>Ready</span>
  <div class="r"><div class="c" style="width:78px"></div><div class="c" style="width:27px"></div><div class="c" style="width:28px"></div><div class="c" style="width:124px;padding-left:1px">ODBC 3.x</div></div>
`);

// ---- taskbar ----
const TASK = {
  ie: `<svg width="40" height="40" viewBox="0 0 40 40"><ellipse cx="20" cy="20" rx="20" ry="10" transform="rotate(-38 20 20)" fill="none" stroke="#f3cf27" stroke-width="2.400"/><path d="M31 18H12a8.500 8.500 0 0 0 16 6" fill="none" stroke="#29a4ea" stroke-width="6"/><path d="M11 20a9 9 0 0 1 18-3" fill="none" stroke="#29a4ea" stroke-width="6"/></svg>`,
  chrome: `<svg width="38" height="38" viewBox="0 0 38 38"><path d="M19 19L5 8A18 18 0 0 1 35 11z" fill="#d8473c"/><path d="M19 19L5 8A18 18 0 0 0 16 37z" fill="#3b9e4d"/><path d="M19 19L35 11A18 18 0 0 1 16 37z" fill="#f2c230"/><circle cx="19" cy="19" r="9" fill="#eee"/><circle cx="19" cy="19" r="6.800" fill="#4a82e8"/></svg>`,
  ybro: `<svg width="40" height="40" viewBox="0 0 40 40"><circle cx="20" cy="20" r="19.500" fill="#f4f1ee"/><path d="M8 11l12 13 12-13M20 23v14" fill="none" stroke="#d20f1e" stroke-width="4.600"/></svg>`,
  folder: `<svg width="36" height="40" viewBox="0 0 36 40"><path d="M2 6h12l3 3h17v26H2z" fill="#f1d76f"/><path d="M5 3h26v8H5z" fill="#f7f3e1"/><path d="M8 4h4M25 6h3" stroke="#3aa648" stroke-width="2"/><path d="M16 6h3" stroke="#d33" stroke-width="2"/><path d="M5 26h26l3 11H2z" fill="#7ec2e6"/><path d="M11 37v-7h14v7" fill="#f3d768"/></svg>`,
  pg: `<svg width="40" height="44" viewBox="0 0 40 44"><path d="M6 3c5-3 11-1 14 0 4-2 14-3 17 2 2 5-1 13-4 19-1 2-4 2-7 2l-1 12c0 4-4 6-7 4-2-2-2-8-2-15-5 0-12-1-13-9C2 12 1 6 6 3z" fill="#336791" stroke="#dfe8f0" stroke-width="1.200"/><path d="M20 3c-3 4-5 9-3 15 1 3 3 4 3 8" fill="none" stroke="#dfe8f0" stroke-width="1.200"/></svg>`,
  paint: `<svg width="40" height="42" viewBox="0 0 40 42"><path d="M3 24C2 12 12 6 22 6c9 0 14 7 12 16-1 6-7 5-9 8-2 5-5 8-12 7-6-1-9-6-10-13z" fill="#a9cde6" stroke="#7ba0bc"/><circle cx="11" cy="22" r="3" fill="#de4b4b"/><circle cx="15" cy="13" r="3" fill="#73b548"/><circle cx="23" cy="11" r="3.400" fill="#f0a21c"/><circle cx="10" cy="30" r="2.400" fill="#e9d34a"/><path d="M38 1L22 37" stroke="#e88a1f" stroke-width="3"/><path d="M33 3l5-3 1 6z" fill="#b58a55"/></svg>`,
  erwin: `<svg width="34" height="42" viewBox="0 0 34 42"><path d="M1 2h16v15H1zM13 25h18v15H13z" fill="#fff" stroke="#111" stroke-width="1.700"/><path d="M1 2h16v3H1zM13 25h18v3H13z" fill="#111"/><path d="M9 17v6h14v2" fill="none" stroke="#111" stroke-width="1.600"/></svg>`
};

defineEl('task-tile', `
  :host { display: flex; align-items: center; justify-content: center; width: 70px; height: 48px; flex: none; box-sizing: border-box; position: relative; color: #fff; font: 700 22px "Noto Sans", sans-serif; }
  :host([box]) { background: rgba(255,255,255,.18); border: 1px solid rgba(255,255,255,.32); }
  :host([active]) { background: linear-gradient(135deg, rgba(255,255,255,.3), rgba(255,255,255,.42)); border: 1.500px solid #fff; }
  .rx { width: 38px; height: 38px; border-radius: 50%; background: #df2833; display: flex; align-items: center; justify-content: center; letter-spacing: -1px; }
  .ya { width: 36px; height: 40px; background: #f5f5f5; clip-path: polygon(0 0, 75% 0, 100% 50%, 75% 100%, 0 100%); display: flex; align-items: center; justify-content: center; color: #e11; font: 700 27px "Noto Sans", sans-serif; padding-right: 6px; box-sizing: border-box; }
`, (el) => {
  const k = el.getAttribute('kind');
  if (k === 'rx') return `<div class="rx">RX</div>`;
  if (k === 'ya') return `<div class="ya">Я</div>`;
  return TASK[k];
});

defineEl('task-bar', `
  :host { display: flex; align-items: stretch; position: relative; height: 48px; background: #b5842e; overflow: hidden; flex: none; }
  .wall { position: absolute; left: 0; top: 0; }
  .start { width: 59px; display: flex; align-items: center; padding-left: 12px; box-sizing: border-box; flex: none; position: relative; }
  .search { display: flex; width: 263px; margin: 5px 0; background: #ececec; position: relative; flex: none; height: 38px; align-items: center; font: 16.5px "Noto Sans", sans-serif; color: #7d7d7d; }
  .search .e { margin: 0 5px 0 5px; }
  .search span { flex: 1; }
  .go { width: 63px; height: 100%; background: #2a8dfb; color: #fff; display: flex; align-items: center; justify-content: center; font-size: 15.500px; flex: none; }
  .tiles { display: flex; gap: 3px; padding-left: 5px; position: relative; }
  .tray { position: absolute; left: 1590px; top: 0; height: 48px; right: 0; color: #fff; font: 14.5px "Noto Sans", sans-serif; display: flex; align-items: center; }
  .tray > * { flex: none; }
  .clock { margin-left: auto; margin-right: 19px; text-align: center; line-height: 22px; font-size: 13.6px; padding-top: 1px; }
`, `
  <svg class="wall" width="1920" height="48" viewBox="0 0 1920 48">
    <rect x="982" width="90" height="48" fill="#a07f3c"/>
    <path d="M1060 0H1680L1774 48H1068z" fill="#bba474"/>
    <path d="M1680 0H1920V48H1774z" fill="#b88b2e"/>
  </svg>
  <div class="start"><svg width="34" height="34" viewBox="0 0 34 34"><path d="M1 5l14-2v13H1zM17 2.700L33 0v16H17zM1 18h14v13L1 29zM17 18h16v16l-16-2.700z" fill="#fff"/></svg></div>
  <div class="search">
    <svg class="e" width="24" height="26" viewBox="0 0 24 26"><path d="M22 14H5a8 8 0 0 0 14 5" fill="none" stroke="#1e88e5" stroke-width="5"/><path d="M4 16a8.500 8.500 0 0 1 17-3" fill="none" stroke="#1e88e5" stroke-width="5"/></svg>
    <span>Поиск</span><div class="go">Найти</div>
  </div>
  <div class="tiles">
    <task-tile kind="ie"></task-tile><task-tile kind="chrome"></task-tile><task-tile kind="ybro" box></task-tile><task-tile kind="ya"></task-tile>
    <task-tile kind="folder" box></task-tile><task-tile kind="pg" box></task-tile><task-tile kind="rx" box></task-tile><task-tile kind="paint" box></task-tile><task-tile kind="erwin" active></task-tile>
  </div>
  <div class="tray">
    <svg width="20" height="14" viewBox="0 0 20 14" style="margin-left:0"><path d="M10 3l7 6H3z" fill="#eee" stroke="#777"/></svg>
    <svg width="24" height="24" viewBox="0 0 24 24" style="margin-left:13px"><circle cx="12" cy="12" r="9.500" fill="#e8b48c" stroke="#e0551c" stroke-width="3"/><rect x="7" y="8" width="10" height="8" fill="#f2f2f2" stroke="#666"/><path d="M7 8h10v2H7z" fill="#777"/></svg>
    <svg width="24" height="24" viewBox="0 0 24 24" style="margin-left:6px"><circle cx="12" cy="12" r="10.500" fill="#d8d523"/><path d="M2 12a10 10 0 0 0 17 7l-3-4a5 5 0 0 1-8-1z" fill="#249a38"/><path d="M10 7h4v3h3v4h-3v3h-4v-3H7v-4h3z" fill="#12892c"/></svg>
    <svg width="24" height="24" viewBox="0 0 24 24" style="margin-left:6px"><path d="M9 3h13v19H9z" fill="#bcae86" stroke="#fff" stroke-width="2"/><path d="M2 8h5v5H5v9H4v-9H2zM3 3v5M6 3v5" fill="#fff" stroke="#fff"/></svg>
    <svg width="22" height="22" viewBox="0 0 22 22" style="margin-left:6px"><path d="M2 15h3v6H2zM6 11h3v10H6zM10 8h3v13h-3zM14 4h3v17h-3z" fill="#eee" stroke="#555" stroke-width=".6"/></svg>
    <svg width="24" height="24" viewBox="0 0 24 24" style="margin-left:7px"><path d="M3 8h4l7-6v21l-7-6H3z" fill="#f2f2f2" stroke="#555" stroke-width=".6"/><path d="M18 9a5 5 0 0 1 0 6" fill="none" stroke="#eee"/></svg>
    <span style="margin-left:16px">РУС</span>
    <div class="clock">20:10<br>13.06.2019</div>
  </div>
`);

defineEl('yandex-toast', `
  :host { position: absolute; left: 1425px; top: 890px; width: 480px; height: 126px; background: #fff; box-shadow: 0 1px 6px rgba(0,0,0,.35); display: grid; grid-template-columns: 88px 1fr; font: 15.2px/22.500px "Noto Sans", sans-serif; color: #333; z-index: 10; }
  .logo { width: 38px; height: 40px; margin: 21px 0 0 26px; border-radius: 50%; background: #f6f6f6; display: flex; align-items: center; justify-content: center; color: #f00; font: 700 25px "Liberation Sans", sans-serif; }
  .logo span { display: block; transform: scale(.85, 1.2); }
  .body { padding-top: 17px; position: relative; }
  .h { font-size: 16px; font-weight: 600; color: #111; line-height: 22px; }
  .t { white-space: nowrap; }
  .u { color: #999; font-size: 13.5px; }
  .ctl { position: absolute; right: 11px; top: 11px; display: flex; gap: 12px; align-items: center; }
`, `
  <div class="logo"><span>Я</span></div>
  <div class="body">
    <div class="h">Яндекс</div>
    <div class="t">Завтра ясно, без осадков. Днём 23...27 °C, ночью<br>17...19 °C</div>
    <div class="u">yandex.ru</div>
    <div class="ctl">
      <svg width="13" height="12" viewBox="0 0 13 12"><path d="M0 1h13M0 6h13M0 11h13" stroke="#ccc" stroke-width="2"/></svg>
      <svg width="12" height="12" viewBox="0 0 12 12"><path d="M1 1l10 10M11 1L1 11" stroke="#bbb" stroke-width="1.400"/></svg>
    </div>
  </div>
`);

const btns = (list) => list.split(' ').map(n => {
  if (n === '|') return '<tool-sep></tool-sep>';
  if (n === 'down') return '<tool-btn icon="down" narrow></tool-btn>';
  if (n.startsWith('*')) return `<tool-btn icon="${n.slice(1)}" pressed></tool-btn>`;
  return `<tool-btn icon="${n}"></tool-btn>`;
}).join('');

defineEl('erwin-app', `
  :host { display: flex; flex-direction: column; width: 1920px; height: 1080px; position: relative; background: #efefef; overflow: hidden; }
  .gap8 { height: 6px; flex: none; background: #efefef; }
  .gap6 { height: 4px; flex: none; background: #efefef; }
  title-bar, menu-bar, tool-area, mdi-frame { flex: none; }
  tool-bar.a, tool-bar.b, tool-bar.c { padding-top: 3px; }
  tool-bar.a { width: 801px; } tool-bar.b { width: 192px; padding-left: 14px; } tool-bar.c { width: 222px; margin-left: 27px; padding-left: 12px; }
  tool-bar.d { width: 595px; } tool-bar.e { width: 257px; padding-left: 9px; }
  tool-bar.f { width: 415px; } tool-bar.g { width: 163px; padding-left: 8px; } tool-bar.h { width: 392px; padding-left: 8px; }
  combo-box.phys { width: 135px; font: 700 17px "Liberation Sans", sans-serif; margin-left: 4px; letter-spacing: .3px; }
  combo-box.fn { width: 211px; margin-left: 2px; font: 15.2px "Liberation Sans", sans-serif; --pad: 4px; }
  combo-box.sz { width: 84px; margin-left: 3px; font: 15.2px "Liberation Sans", sans-serif; --pad: 1px; }
`, `
  <title-bar></title-bar>
  <menu-bar></menu-bar>
  <tool-area>
    <tool-row>
      <tool-bar class="a">${btns('new open save | print | find replace | docgreen docblue | sub1 *tbl1 tbl2 | undo stop | zout zin zgrey zfit zsel | panel down |')}<combo-box class="phys">Physical</combo-box></tool-bar>
      <tool-bar class="b">${btns('*cursor ent entr c1 c2 c3')}</tool-bar>
      <tool-bar class="c">${btns('rect rrect oval ln pin tag txt')}</tool-bar>
    </tool-row>
    <tool-row>
      <tool-bar class="d"><combo-box class="fn">Microsoft Sans Serif</combo-box><combo-box class="sz">10</combo-box><tool-sep></tool-sep>${btns('b i u s | font down fill down line down')}</tool-bar>
      <tool-bar class="e">${btns('aT aB aL aR | dH dV sW sH')}</tool-bar>
    </tool-row>
    <tool-row>
      <tool-bar class="f">${btns('b1 b2 | lock | b3 sq | puz sync b4 b5 | link cloud | ppl')}</tool-bar>
      <tool-bar class="g">${btns('gear1 gear2 headset mouse sql')}</tool-bar>
      <tool-bar class="h">${btns('tr1 tr2 tr3 tr4 col2 row2 ordD ordU h note dia back tool')}</tool-bar>
    </tool-row>
  </tool-area>
  <mdi-frame>
    <model-canvas>
      <er-entity name="Vendor" x="145" y="272" w="114" h="129" div="33" keys="IdVendor" attrs="NameVendc|Address|Email"></er-entity>
      <er-entity name="Good" x="618" y="223" w="134" h="135" div="33" keys="IdGood" attrs="NameGood|price|measure"></er-entity>
      <er-entity name="Delivery" x="283" y="527" w="132" h="136" div="72" rounded keys="IdDelivery|IdVendor (FK)|IdGood (FK)" attrs="Date|Amounts|Measure"></er-entity>
      <er-entity name="Inventory" x="640" y="493" w="119" h="130" div="53" rounded keys="IdInv|IdGood (FK)" attrs="Amounts|Measure"></er-entity>
      <er-entity name="Sale" x="1028" y="272" w="122" h="150" div="72" rounded selected keys="IdSale|IdGood (FK)|IdClient (FK)" attrs="Date|Amounts|Measure"></er-entity>
      <er-entity name="Clients" x="1000" y="493" w="125" h="132" div="33" keys="IdClient" attrs="NameClient|Address|Email"></er-entity>
      <er-entity name="Access" x="1322" y="398" w="116" h="109" div="33" keys="IdAccess" attrs="AccessName|Password"></er-entity>
    </model-canvas>
  </mdi-frame>
  <div class="gap8"></div>
  <bottom-panes><left-pane></left-pane><right-pane></right-pane></bottom-panes>
  <div class="gap6"></div>
  <status-bar></status-bar>
  <task-bar></task-bar>
  <yandex-toast></yandex-toast>
`);
</script>
</body>
</html>
